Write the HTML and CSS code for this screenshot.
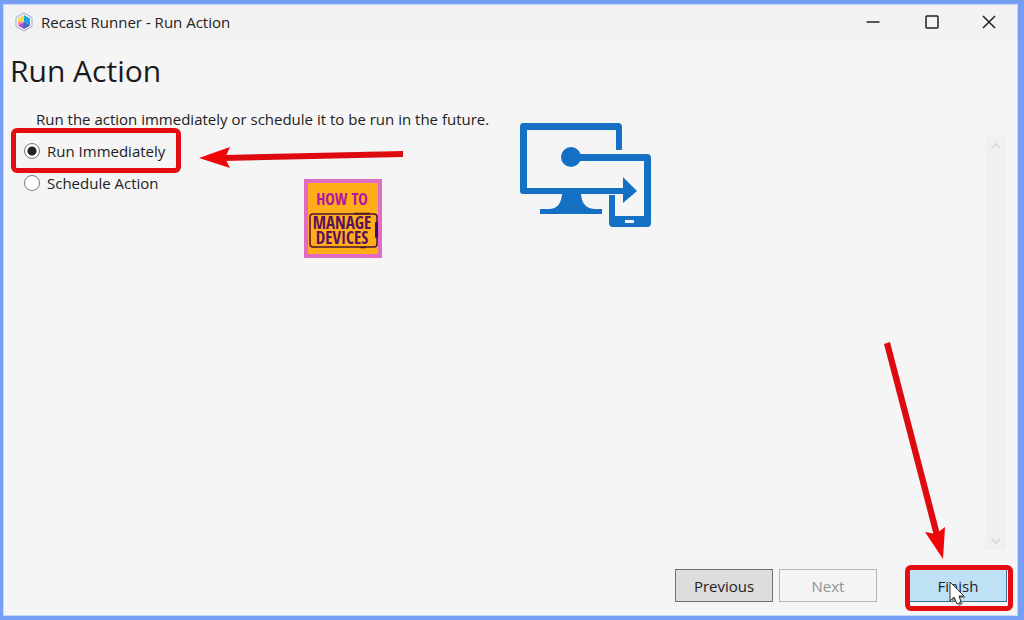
FILE: index.html
```html
<!DOCTYPE html>
<html lang="en">
<head>
    <meta charset="UTF-8">
    <meta name="viewport" content="width=device-width, initial-scale=1.0">
    <title>Recast Runner - Run Action</title>
    <link rel="stylesheet" href="styles.css">
</head>
<body>
    <div class="window">
        <header class="titlebar">
            <svg class="app-icon" viewBox="0 0 20 20" aria-hidden="true">
                <path d="M10 1 L18 5.500 V14.500 L10 19 L2 14.500 V5.500 Z" fill="#f4f4fa" stroke="#a4a7c0" stroke-width="1"/>
                <path d="M10 3 V10 L4 13.500 V6.500 Z" fill="#f3dc4e"/>
                <path d="M10 3 L16 6.500 V13.500 L10 10 Z" fill="#1aa5df"/>
                <path d="M4 13.500 L10 10 L16 13.500 L10 17 Z" fill="#9a52cf"/>
                <path d="M4 9.500 L10 10 L4 13.500 Z" fill="#ef8fb0"/>
                <path d="M10 10 L16 13.500 L10 17 Z" fill="#4a63cf"/>
            </svg>
            <span class="title">Recast Runner - Run Action</span>
            <button class="caption-btn" aria-label="Minimize">
                <svg viewBox="0 0 14 14"><path d="M0.500 7 H13.500"/></svg>
            </button>
            <button class="caption-btn" aria-label="Maximize">
                <svg viewBox="0 0 14 14"><rect x="1" y="1" width="12" height="12" rx="1"/></svg>
            </button>
            <button class="caption-btn" aria-label="Close">
                <svg viewBox="0 0 14 14"><path d="M1 1 L13 13 M13 1 L1 13"/></svg>
            </button>
        </header>

        <h1>Run Action</h1>
        <p class="intro">Run the action immediately or schedule it to be run in the future.</p>

        <main class="panel">
            <div class="options">
                <div class="option marked">
                    <input type="radio" name="when" id="now" checked>
                    <label for="now">Run Immediately</label>
                    <svg class="arrow-left" viewBox="0 0 206 24" aria-hidden="true">
                        <path d="M26 10 L205 6 V12 L26 16 Z" fill="#dd0b0f"/>
                        <path d="M1 13 L32 2 L27 13 L32 23 Z" fill="#f00508"/>
                    </svg>
                </div>
                <div class="option">
                    <input type="radio" name="when" id="later">
                    <label for="later">Schedule Action</label>
                </div>
            </div>

            <svg class="site-logo" viewBox="0 0 78 79" role="img" aria-label="How to Manage Devices">
                <rect width="78" height="79" fill="#e26bc4"/>
                <rect x="4" y="4" width="70" height="71" fill="#ffae18"/>
                <text class="logo-top" x="38" y="26">HOW TO</text>
                <rect x="6" y="35" width="67" height="33" rx="3" fill="none" stroke="#4a1236" stroke-width="1.500"/>
                <path d="M50 34.500 H66 M56 68.500 H62" stroke="#4a1236" stroke-width="1.500"/>
                <rect x="71" y="43" width="3" height="16" rx="1" fill="#35106a"/>
                <text class="logo-bottom"><tspan x="38" y="50">MANAGE</tspan><tspan x="38" y="65">DEVICES</tspan></text>
            </svg>

            <svg class="devices-logo" viewBox="0 0 131 104" aria-hidden="true">
                <g fill="#1470c2">
                    <path d="M3 0 H98 Q102 0 102 4 V27 H96 V7 H7 V65 H103 V54 L117 68 L103 80 V71 H3 Q0 71 0 68 V4 Q0 0 3 0 Z"/>
                    <circle cx="51" cy="34" r="10"/>
                    <path d="M51 31 H127 Q131 31 131 35 V100 Q131 104 127 104 H93 Q89 104 89 100 V72 H95 V93 H124 V38 H51 Z"/>
                    <path d="M42 71 H61 Q62 85 74 86 H82 V91 H20 V86 H30 Q41 85 42 71 Z"/>
                </g>
                <rect x="105" y="97" width="9" height="3" fill="#f5f5f5"/>
            </svg>

            <div class="scrollbar" aria-hidden="true">
                <svg viewBox="0 0 10 8"><path d="M1 6 L5 2 L9 6"/></svg>
                <svg viewBox="0 0 10 8"><path d="M1 2 L5 6 L9 2"/></svg>
            </div>
        </main>

        <footer class="buttons">
            <button class="btn">Previous</button>
            <button class="btn" disabled>Next</button>
            <div class="finish">
                <button class="btn btn-finish">Finish</button>
                <svg class="arrow-down" viewBox="0 0 66 218" aria-hidden="true">
                    <path d="M3 2 L9 0 L59 192 L53 194 Z" fill="#dd0b0f"/>
                    <path d="M62 217 L44 190 L55 192 L64 185 Z" fill="#f00508"/>
                </svg>
                <svg class="cursor" viewBox="0 0 18 26" aria-hidden="true">
                    <path d="M3 3 V22 L7 18 L10 25 L14 23 L11 17 H17 Z" fill="#888"/>
                    <path d="M1 1 V20 L5 16 L8 23 L12 21 L10 15 H15 Z" fill="#fff" stroke="#333" stroke-width="1"/>
                </svg>
            </div>
        </footer>
    </div>
</body>
</html>
```
FILE: styles.css
```css
* {
    box-sizing: border-box;
}

body {
    margin: 0;
    min-height: 100vh;
    padding: 4px 6px 4px 3px;
    display: flex;
    background-color: #759ff5;
    font-family: "Open Sans", "Noto Sans", sans-serif;
    font-size: 15px;
    color: #222;
}

.window {
    flex: 1;
    display: flex;
    flex-direction: column;
    background-color: #f5f5f5;
    border: 1px solid #c3d6fb;
}

.titlebar {
    display: flex;
    align-items: center;
    height: 34px;
    padding-left: 10px;
    background-color: #f2f2f2;
}

.app-icon {
    width: 20px;
    height: 20px;
    margin-right: 7px;
}

.title {
    flex: 1;
}

.caption-btn {
    display: flex;
    align-items: center;
    justify-content: center;
    width: 59px;
    height: 34px;
    padding: 0;
    border: none;
    background: none;
}

.caption-btn:last-child {
    width: 56px;
}

.caption-btn svg {
    width: 14px;
    height: 14px;
    fill: none;
    stroke: #222;
    stroke-width: 1.5;
}

h1 {
    margin: 12px 0 0 6px;
    font-size: 30px;
    font-weight: normal;
    line-height: 40px;
    color: #1a1a1a;
}

.intro {
    margin: 16px 0 0 32px;
    line-height: 24px;
}

.panel {
    position: relative;
    flex: 1;
    display: flex;
    justify-content: space-between;
    padding: 4px 11px 0 8px;
}

.options {
    display: flex;
    flex-direction: column;
}

.option {
    position: relative;
    display: flex;
    align-items: center;
    gap: 7px;
    height: 32px;
    padding: 0 16px 0 12px;
}

.option input {
    appearance: none;
    width: 16px;
    height: 16px;
    margin: 0;
    border: 1px solid #777;
    border-radius: 50%;
    background-color: #fff;
}

.option input:checked {
    background-image: radial-gradient(circle, #222 4px, transparent 5px);
}

/* red highlight around the picked option */
.marked::before {
    content: "";
    position: absolute;
    inset: -7px 0 -6px -1px;
    border: 5px solid #e30d12;
    border-radius: 6px;
}

.arrow-left {
    position: absolute;
    left: 186px;
    top: 10px;
    width: 206px;
    height: 24px;
}

.site-logo {
    position: absolute;
    left: 300px;
    top: 48px;
    width: 78px;
    height: 79px;
}

.site-logo text {
    font-family: "Liberation Sans Narrow", "Open Sans Condensed", sans-serif;
    font-weight: bold;
    text-anchor: middle;
}

.logo-top {
    font-size: 16px;
    fill: #b313a6;
}

.logo-bottom {
    font-size: 17px;
    fill: #5a1060;
}

.devices-logo {
    position: absolute;
    left: 516px;
    top: -8px;
    width: 131px;
    height: 104px;
}

.scrollbar {
    display: flex;
    flex-direction: column;
    justify-content: space-between;
    align-items: center;
    width: 21px;
    padding: 7px 0 5px;
    background-color: #f0f0f0;
}

.scrollbar svg {
    width: 10px;
    height: 8px;
    fill: none;
    stroke: #dcdcdc;
    stroke-width: 2;
}

.buttons {
    display: flex;
    justify-content: flex-end;
    gap: 6px;
    padding: 19px 10px 13px 0;
}

.btn {
    width: 98px;
    height: 33px;
    padding: 0;
    border: 1px solid #707070;
    background-color: #dddddd;
    font: inherit;
    color: #222;
}

.btn:disabled {
    border-color: #b5b5b5;
    background-color: #f4f4f4;
    color: #929292;
}

.finish {
    position: relative;
    margin-left: 26px;
}

.btn-finish {
    display: block;
    border-color: #3c6f8f;
    background-color: #bee1f5;
}

.finish::after {
    content: "";
    position: absolute;
    inset: -4px -6px -9px -4px;
    border: 5px solid #e30d12;
    border-radius: 6px;
}

.arrow-down {
    position: absolute;
    right: 60px;
    bottom: 42px;
    width: 66px;
    height: 218px;
}

.cursor {
    position: absolute;
    left: 40px;
    top: 12px;
    width: 18px;
    height: 26px;
}
```
